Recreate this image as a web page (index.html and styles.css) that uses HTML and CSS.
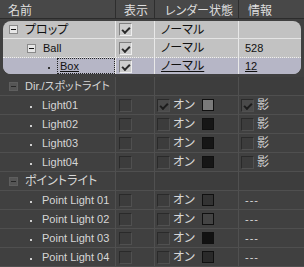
FILE: index.html
```html
<!DOCTYPE html>
<html lang="ja">
<head>
  <meta charset="UTF-8">
  <title>Scene List</title>
  <link rel="stylesheet" href="styles.css">
</head>
<body>
  <div class="panel">
    <div class="row head">
      <div class="cell c-name">名前</div>
      <div class="cell c-vis">表示</div>
      <div class="cell c-ren">レンダー状態</div>
      <div class="cell c-info">情報</div>
    </div>

    <!-- selected prop group -->
    <div class="group">
      <div class="row lt first">
        <div class="cell c-name"><span class="tog"></span><span class="txt">プロップ</span></div>
        <div class="cell c-vis"><span class="chk on"></span></div>
        <div class="cell c-ren"><span class="txt">ノーマル</span></div>
        <div class="cell c-info"></div>
      </div>
      <div class="row lt mid">
        <div class="cell c-name lv1"><span class="tog"></span><span class="txt en">Ball</span></div>
        <div class="cell c-vis"><span class="chk on"></span></div>
        <div class="cell c-ren"><span class="txt">ノーマル</span></div>
        <div class="cell c-info"><span class="txt en">528</span></div>
      </div>
      <div class="row lt sel">
        <div class="cell c-name lv2"><span class="dot"></span><span class="focus"><span class="txt en u">Box</span></span></div>
        <div class="cell c-vis"><span class="chk on"></span></div>
        <div class="cell c-ren"><span class="txt u">ノーマル</span></div>
        <div class="cell c-info"><span class="txt en u">12</span></div>
      </div>
    </div>

    <div class="row dk grp">
      <div class="cell c-name"><span class="tog"></span><span class="txt en">Dir./スポットライト</span></div>
      <div class="cell c-vis"></div>
      <div class="cell c-ren"></div>
      <div class="cell c-info"></div>
    </div>
    <div class="row dk">
      <div class="cell c-name lvl"><span class="dot"></span><span class="txt en">Light01</span></div>
      <div class="cell c-vis"><span class="chk"></span></div>
      <div class="cell c-ren"><span class="chk on"></span><span class="txt">オン</span><span class="sw" style="background:#7a7a7a"></span></div>
      <div class="cell c-info"><span class="chk on"></span><span class="txt">影</span></div>
    </div>
    <div class="row dk">
      <div class="cell c-name lvl"><span class="dot"></span><span class="txt en">Light02</span></div>
      <div class="cell c-vis"><span class="chk"></span></div>
      <div class="cell c-ren"><span class="chk"></span><span class="txt">オン</span><span class="sw" style="background:#161616"></span></div>
      <div class="cell c-info"><span class="chk"></span><span class="txt">影</span></div>
    </div>
    <div class="row dk">
      <div class="cell c-name lvl"><span class="dot"></span><span class="txt en">Light03</span></div>
      <div class="cell c-vis"><span class="chk"></span></div>
      <div class="cell c-ren"><span class="chk"></span><span class="txt">オン</span><span class="sw" style="background:#161616"></span></div>
      <div class="cell c-info"><span class="chk"></span><span class="txt">影</span></div>
    </div>
    <div class="row dk">
      <div class="cell c-name lvl"><span class="dot"></span><span class="txt en">Light04</span></div>
      <div class="cell c-vis"><span class="chk"></span></div>
      <div class="cell c-ren"><span class="chk"></span><span class="txt">オン</span><span class="sw" style="background:#161616"></span></div>
      <div class="cell c-info"><span class="chk"></span><span class="txt">影</span></div>
    </div>

    <div class="row dk grp">
      <div class="cell c-name"><span class="tog"></span><span class="txt">ポイントライト</span></div>
      <div class="cell c-vis"></div>
      <div class="cell c-ren"></div>
      <div class="cell c-info"></div>
    </div>
    <div class="row dk">
      <div class="cell c-name lvl"><span class="dot"></span><span class="txt en">Point Light 01</span></div>
      <div class="cell c-vis"><span class="chk"></span></div>
      <div class="cell c-ren"><span class="chk"></span><span class="txt">オン</span><span class="sw" style="background:#333333"></span></div>
      <div class="cell c-info"><span class="txt en dash">---</span></div>
    </div>
    <div class="row dk">
      <div class="cell c-name lvl"><span class="dot"></span><span class="txt en">Point Light 02</span></div>
      <div class="cell c-vis"><span class="chk"></span></div>
      <div class="cell c-ren"><span class="chk"></span><span class="txt">オン</span><span class="sw" style="background:#444444"></span></div>
      <div class="cell c-info"><span class="txt en dash">---</span></div>
    </div>
    <div class="row dk">
      <div class="cell c-name lvl"><span class="dot"></span><span class="txt en">Point Light 03</span></div>
      <div class="cell c-vis"><span class="chk"></span></div>
      <div class="cell c-ren"><span class="chk"></span><span class="txt">オン</span><span class="sw" style="background:#111111"></span></div>
      <div class="cell c-info"><span class="txt en dash">---</span></div>
    </div>
    <div class="row dk">
      <div class="cell c-name lvl"><span class="dot"></span><span class="txt en">Point Light 04</span></div>
      <div class="cell c-vis"><span class="chk"></span></div>
      <div class="cell c-ren"><span class="chk"></span><span class="txt">オン</span><span class="sw" style="background:#2a2a2a"></span></div>
      <div class="cell c-info"><span class="txt en dash">---</span></div>
    </div>
  </div>
</body>
</html>
```

FILE: styles.css
```css
/* scene list panel */
body {
  margin: 0;
  background: #404040;
  font-family: "Liberation Sans", "Noto Sans CJK JP", sans-serif;
  font-size: 12px;
  font-feature-settings: "palt";
  color: #d6d6d6;
}

.panel {
  width: 304px;
  height: 267px;
  overflow: hidden;
  background: #404040;
}

.row {
  display: flex;
  height: 18px;
  border-bottom: 1px solid #4f4f4f;
}

.cell {
  display: flex;
  align-items: center;
  box-sizing: border-box;
  height: 100%;
  border-right: 1px solid #505050;
  white-space: nowrap;
}

.c-name { width: 116px; }
.c-vis { width: 39px; padding-left: 3px; }
.c-ren { width: 84px; padding-left: 2px; }
.c-info { flex: 1; padding-left: 2px; border-right: none; }

/* header */
.head {
  background: #484848;
  border-bottom: 1px solid #2c2c2c;
  color: #dedede;
}

.head .cell {
  padding-left: 8px;
  border-right: 1px solid #2e2e2e;
}

.head .c-ren { padding-left: 10px; }
.head .c-info { padding-left: 9px; border-right: none; }

/* selected group */
.group {
  margin: 2px 3px 3px;
  border-radius: 8px;
  overflow: hidden;
  background: #c2c2c2;
}

.lt {
  color: #111;
  border-bottom: 1px solid #e4e4e4;
}

.lt .cell { border-right: 1px solid #e8e8e8; }
.lt .c-name { width: 113px; }
.lt .c-info { border-right: none; }
.lt .c-ren, .lt .c-info { padding-left: 6px; }

.lt.first { height: 17px; }
.lt.mid { border-bottom: 1px dotted #f0f0f0; }
.lt.sel {
  height: 16px;
  border-bottom: none;
  background: #b6b6c6;
}

.txt { line-height: 16px; }
.en { font-size: 11px; }
.u { text-decoration: underline; }

.lt .c-name { padding-left: 6px; }
.lt .lv1 { padding-left: 24px; }
.lt .lv2 { padding-left: 45px; }
.lt .tog { margin-right: 7px; }
.lt .dot { background: #333; margin-right: 7px; }

.focus {
  display: flex;
  align-items: center;
  flex: 1;
  height: 100%;
  box-sizing: border-box;
  border: 1px dotted #222;
  padding-left: 2px;
}

/* dark rows */
.dk .c-name { padding-left: 9px; }
.dk .lvl { padding-left: 30px; }
.dk .tog { margin-right: 7px; }
.dk .dot { margin-right: 10px; }

.grp .c-vis, .grp .c-ren, .grp .c-info { background: #3d3d3d; }

/* expand toggle */
.tog {
  position: relative;
  width: 9px;
  height: 9px;
  box-sizing: border-box;
  border: 1px solid #8a8a8a;
  background: #e6e6e6;
  flex: none;
}

.tog::after {
  content: "";
  position: absolute;
  left: 1px;
  top: 3px;
  width: 5px;
  height: 1px;
  background: #111;
}

.dk .tog {
  border-color: #5e5e5e;
  background: #555;
}

.dk .tog::after { background: #262626; }

.dot {
  width: 2px;
  height: 2px;
  margin-top: 3px;
  background: #cfcfcf;
  flex: none;
}

/* checkbox */
.chk {
  position: relative;
  width: 13px;
  height: 13px;
  box-sizing: border-box;
  border-top: 1px solid #2a2a2a;
  border-left: 1px solid #2a2a2a;
  border-bottom: 1px solid #505050;
  border-right: 1px solid #505050;
  background: #3c3c3c;
  flex: none;
}

.lt .chk {
  border-top-color: #808080;
  border-left-color: #808080;
  border-bottom-color: #eeeeee;
  border-right-color: #eeeeee;
  background: #cdcdcd;
}

.dk .chk.on { background: #4a4a4a; }

.chk.on::after {
  content: "";
  position: absolute;
  left: 2px;
  top: 0;
  width: 6px;
  height: 3px;
  border-left: 2px solid #2a2a2a;
  border-bottom: 2px solid #2a2a2a;
  transform: translate(0, 3px) rotate(-45deg);
  transform-origin: center;
}

.dk .chk.on::after {
  border-color: #1c1c1c;
}

.c-ren .chk, .c-info .chk { margin-right: 3px; }

.sw {
  width: 12px;
  height: 12px;
  margin-left: 7px;
  box-sizing: border-box;
  border: 1px solid #101010;
  flex: none;
}

.dash { margin-left: 4px; letter-spacing: 1px; }
```
